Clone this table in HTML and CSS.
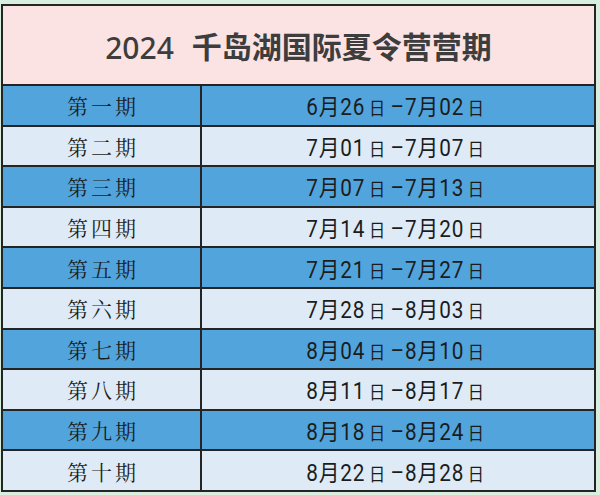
FILE: index.html
```html
<!DOCTYPE html>
<html lang="zh">
<head>
<meta charset="utf-8">
<link rel="stylesheet" href="styles.css">
</head>
<body>
<div class="page">
<table class="sheet">
  <colgroup><col class="c1"><col class="c2"></colgroup>
  <tr class="head"><th colspan="2"><span class="year">2024</span><span class="title">千岛湖国际夏令营营期</span></th></tr>
  <tr class="dark"><td class="p">第一期</td><td class="d"><span class="dt">6月26<span class="r">日</span>–7月02<span class="r">日</span></span></td></tr>
  <tr class="light"><td class="p">第二期</td><td class="d"><span class="dt">7月01<span class="r">日</span>–7月07<span class="r">日</span></span></td></tr>
  <tr class="dark"><td class="p">第三期</td><td class="d"><span class="dt">7月07<span class="r">日</span>–7月13<span class="r">日</span></span></td></tr>
  <tr class="light"><td class="p">第四期</td><td class="d"><span class="dt">7月14<span class="r">日</span>–7月20<span class="r">日</span></span></td></tr>
  <tr class="dark"><td class="p">第五期</td><td class="d"><span class="dt">7月21<span class="r">日</span>–7月27<span class="r">日</span></span></td></tr>
  <tr class="light"><td class="p">第六期</td><td class="d"><span class="dt">7月28<span class="r">日</span>–8月03<span class="r">日</span></span></td></tr>
  <tr class="dark"><td class="p">第七期</td><td class="d"><span class="dt">8月04<span class="r">日</span>–8月10<span class="r">日</span></span></td></tr>
  <tr class="light"><td class="p">第八期</td><td class="d"><span class="dt">8月11<span class="r">日</span>–8月17<span class="r">日</span></span></td></tr>
  <tr class="dark"><td class="p">第九期</td><td class="d"><span class="dt">8月18<span class="r">日</span>–8月24<span class="r">日</span></span></td></tr>
  <tr class="light"><td class="p">第十期</td><td class="d"><span class="dt">8月22<span class="r">日</span>–8月28<span class="r">日</span></span></td></tr>
</table>
</div>
</body>
</html>
```
FILE: styles.css
```css
html, body {
  margin: 0;
  padding: 0;
  background: #d8efdf;
}
.page {
  width: 600px;
  height: 495px;
  padding: 4px 0 0 1px;
  box-sizing: border-box;
}
.sheet {
  width: 595px;
  border-collapse: collapse;
  border: 2px solid #242424;
  table-layout: fixed;
}
.c1 { width: 199px; }
.sheet td, .sheet th {
  border: 2px solid #242424;
  padding: 0;
  text-align: center;
  vertical-align: middle;
}
.head th {
  height: 78px;
  background: #fbe3e3;
  color: #3d3d3d;
  font-size: 30px;
}
.year {
  font-family: "Noto Sans", "Liberation Sans", sans-serif;
  font-weight: 500;
  margin-right: 18px;
  position: relative;
  top: 1px;
}
.title {
  font-family: "Noto Sans CJK SC", sans-serif;
  font-weight: 700;
}
.sheet tr:not(.head) {
  height: 40.6px;
}
.dark td { background: #51a5dc; }
.light td { background: #deebf7; }
.p {
  font-family: "Noto Serif CJK SC", "Noto Sans CJK SC", serif;
  font-size: 21px;
  font-weight: 400;
  letter-spacing: 3px;
  color: #1c1c1c;
  padding-left: 3px !important;
}
.d {
  font-family: "Roboto", "Liberation Sans", "Noto Sans CJK SC", sans-serif;
  font-size: 23px;
  font-weight: 400;
  color: #1c1c1c;
}
.dt {
  display: inline-block;
  transform: scaleX(0.9);
  white-space: nowrap;
  letter-spacing: 1px;
}
.r {
  font-family: "Noto Sans CJK SC", sans-serif;
  font-size: 18px;
  font-weight: 400;
  margin: 0 5px 0 4px;
}
```
